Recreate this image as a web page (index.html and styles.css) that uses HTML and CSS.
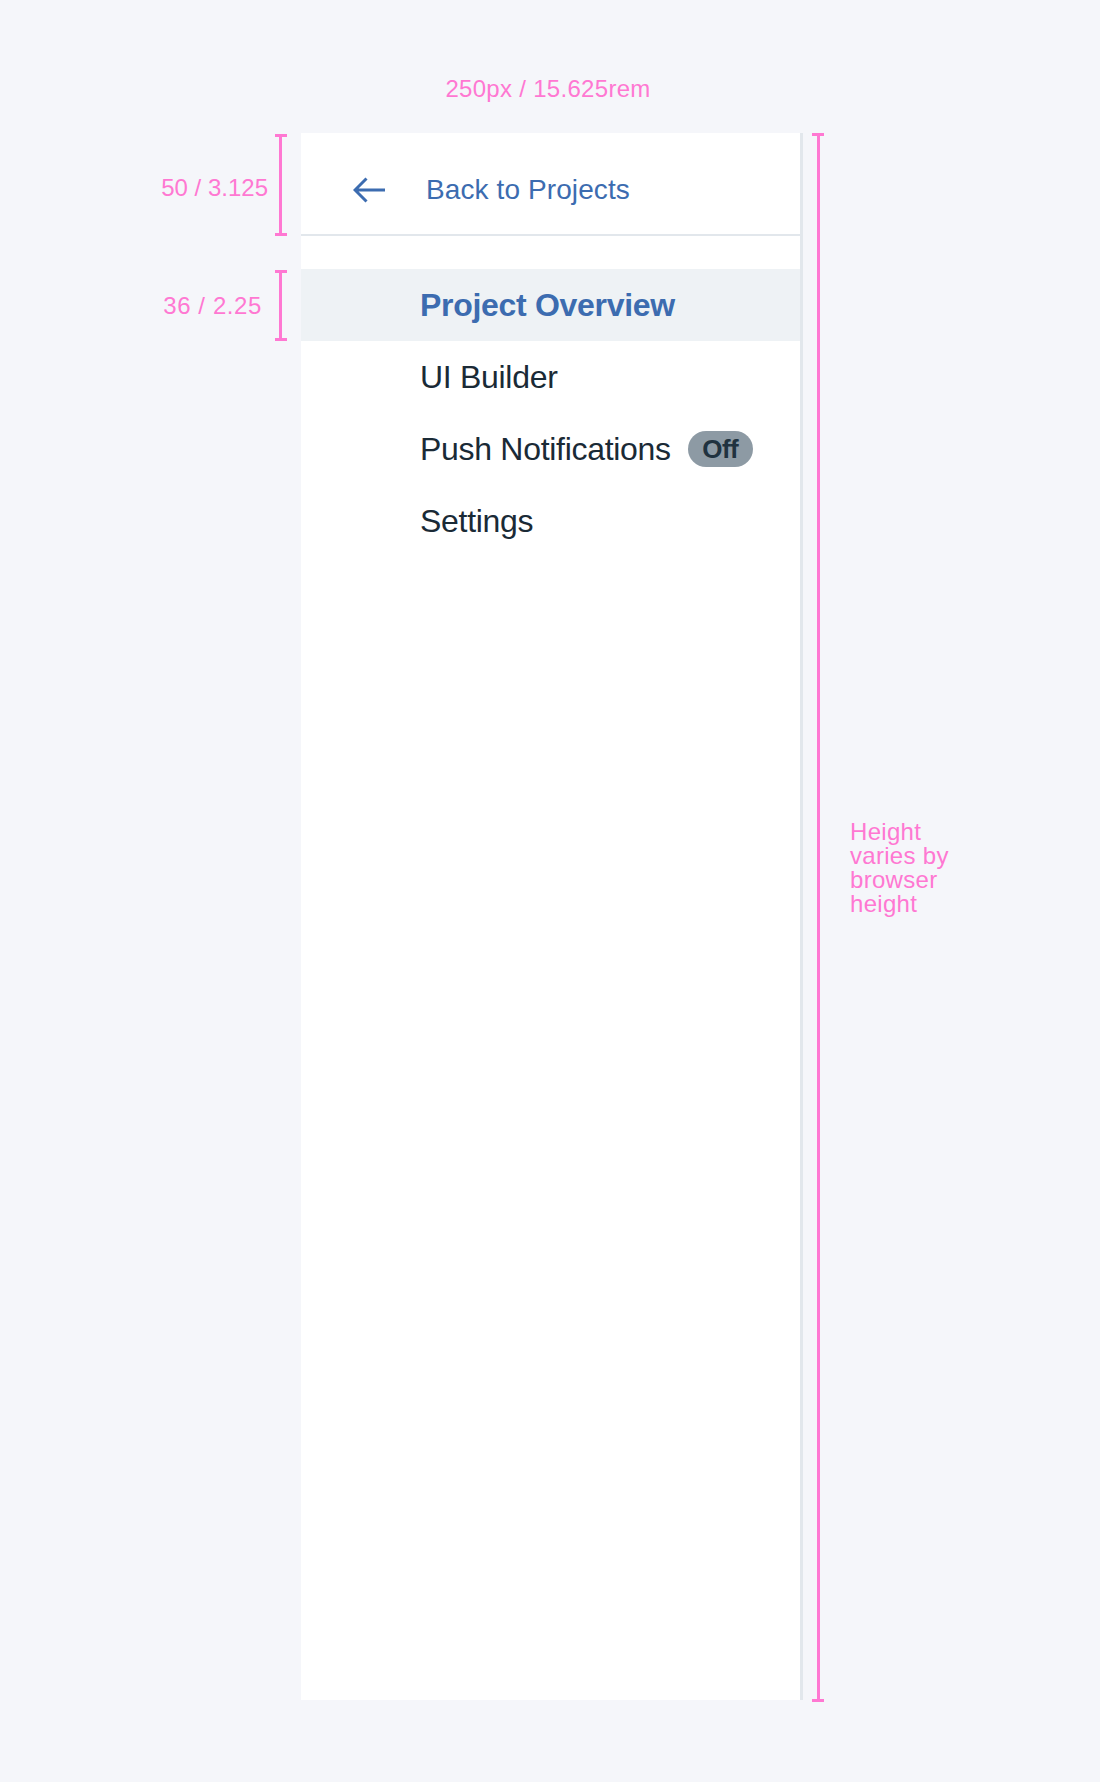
FILE: index.html
```html
<!DOCTYPE html>
<html lang="en">
<head>
<meta charset="utf-8">
<title>Sidebar spec</title>
<link rel="stylesheet" href="styles.css">
</head>
<body>
<div class="page">
  <div class="corner"></div>
  <div class="width-label">250px / 15.625rem</div>
  <div class="spacer"></div>

  <div class="left-dims">
    <div class="dim dim-header">
      <span class="dim-text">50 / 3.125</span>
      <span class="bracket"></span>
    </div>
    <div class="dim dim-item">
      <span class="dim-text">36 / 2.25</span>
      <span class="bracket"></span>
    </div>
  </div>

  <aside class="sidebar">
    <div class="sidebar-header">
      <svg class="back-icon" viewBox="0 0 32 26" width="32" height="26" aria-hidden="true">
        <path d="M32 13H3 M13.5 1.5 L2 13 L13.5 24.5" fill="none" stroke="#3c6cb0" stroke-width="3"/>
      </svg>
      <span class="back-text">Back to Projects</span>
    </div>
    <nav class="nav">
      <div class="nav-item active">Project Overview</div>
      <div class="nav-item">UI Builder</div>
      <div class="nav-item">Push Notifications <span class="badge">Off</span></div>
      <div class="nav-item">Settings</div>
    </nav>
  </aside>

  <div class="right-dims">
    <span class="bracket bracket-tall"></span>
    <div class="height-note">Height varies by browser height</div>
  </div>
</div>
</body>
</html>
```

FILE: styles.css
```css
* { box-sizing: border-box; }

body {
  margin: 0;
  background: #f5f6fa;
  font-family: "Liberation Sans", Arial, Helvetica, sans-serif;
}

.page {
  display: grid;
  grid-template-columns: 301px 502px 1fr;
  grid-template-rows: 133px 1567px;
  min-height: 1782px;
}

.width-label {
  color: #ff78d2;
  font-size: 24px;
  line-height: 28px;
  letter-spacing: 0.3px;
  text-align: center;
  padding-top: 75px;
  padding-right: 8px;
}

.bracket {
  display: block;
  width: 12px;
  border-top: 3px solid #ff78d2;
  border-bottom: 3px solid #ff78d2;
  background: linear-gradient(90deg, transparent 4.5px, #ff78d2 4.5px, #ff78d2 7.5px, transparent 7.5px);
}

.left-dims {
  display: flex;
  flex-direction: column;
  padding-top: 1px;
  padding-right: 14px;
}

.dim {
  display: flex;
  align-items: center;
  justify-content: flex-end;
}

.dim .bracket { height: 100%; }

.dim-text {
  color: #ff78d2;
  font-size: 24px;
  line-height: 28px;
}

.dim-header { height: 102px; }
.dim-header .dim-text { margin-right: 7px; margin-top: 6px; }

.dim-item { height: 71px; margin-top: 34px; }
.dim-item .dim-text { margin-right: 13px; letter-spacing: 0.6px; }

.sidebar {
  background: #ffffff;
  border-right: 3px solid #e2e7ec;
  display: flex;
  flex-direction: column;
}

.sidebar-header {
  height: 103px;
  border-bottom: 2px solid #e2e7ec;
  display: flex;
  align-items: center;
  padding-left: 52px;
  padding-top: 12px;
}

.back-icon {
  display: block;
  width: 32px;
  height: 26px;
}

.back-text {
  color: #3c6cb0;
  font-size: 28px;
  margin-left: 41px;
  letter-spacing: 0.1px;
}

.nav {
  padding-top: 33px;
  display: flex;
  flex-direction: column;
}

.nav-item {
  height: 72px;
  display: flex;
  align-items: center;
  padding-left: 119px;
  font-size: 32px;
  letter-spacing: -0.3px;
  color: #1a2a36;
}

.nav-item.active {
  background: #eef2f5;
  color: #3c6cb0;
  font-weight: bold;
}

.badge {
  display: inline-flex;
  align-items: center;
  justify-content: center;
  height: 36px;
  width: 65px;
  margin-left: 17px;
  border-radius: 18px;
  background: #8d9aa4;
  color: #20323f;
  font-size: 26px;
  font-weight: bold;
  letter-spacing: -0.6px;
}

.right-dims {
  display: flex;
  align-items: flex-start;
  padding-left: 9px;
}

.bracket-tall { height: 1569px; }

.height-note {
  color: #ff78d2;
  font-size: 24px;
  line-height: 24px;
  letter-spacing: 0.3px;
  width: 112px;
  margin-left: 26px;
  padding-top: 687px;
}
```
